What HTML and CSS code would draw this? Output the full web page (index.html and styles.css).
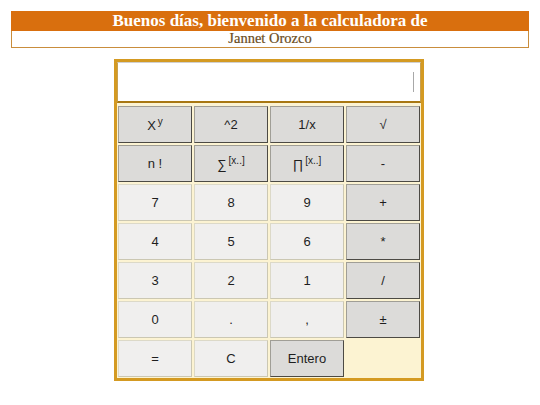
FILE: index.html
```html
<!DOCTYPE html>
<html lang="es">
<head>
<meta charset="utf-8">
<title>Calculadora</title>
<link rel="stylesheet" href="styles.css">
</head>
<body>
<header class="header">
  <div class="title">Buenos días, bienvenido a la calculadora de</div>
  <div class="author">Jannet Orozco</div>
</header>
<main class="calc">
  <div class="display"><span class="caret"></span></div>
  <div class="keys">
    <button class="key fn">X<sup>y</sup></button>
    <button class="key fn">^2</button>
    <button class="key fn">1/x</button>
    <button class="key fn">√</button>
    <button class="key fn">n !</button>
    <button class="key fn">∑<sup>[x..]</sup></button>
    <button class="key fn">∏<sup>[x..]</sup></button>
    <button class="key fn">-</button>
    <button class="key num">7</button>
    <button class="key num">8</button>
    <button class="key num">9</button>
    <button class="key fn">+</button>
    <button class="key num">4</button>
    <button class="key num">5</button>
    <button class="key num">6</button>
    <button class="key fn">*</button>
    <button class="key num">3</button>
    <button class="key num">2</button>
    <button class="key num">1</button>
    <button class="key fn">/</button>
    <button class="key num">0</button>
    <button class="key num">.</button>
    <button class="key num">,</button>
    <button class="key fn">±</button>
    <button class="key num">=</button>
    <button class="key num">C</button>
    <button class="key fn">Entero</button>
    <div class="blank"></div>
  </div>
</main>
</body>
</html>
```
FILE: styles.css
```css
html, body {
  margin: 0;
  padding: 0;
  background: #ffffff;
}

.header {
  margin: 11px 11px 0;
  font-family: "Liberation Serif", "Times New Roman", serif;
  text-align: center;
}

.title {
  background: #d96f0e;
  color: #ffffff;
  font-weight: bold;
  font-size: 17px;
  height: 20px;
  line-height: 20px;
}

.author {
  border: 1px solid #c98d3c;
  border-top: none;
  color: #6a4c1c;
  font-size: 14.5px;
  height: 16px;
  line-height: 15px;
  -webkit-text-stroke: 0.2px #6a4c1c;
}

.calc {
  width: 304px;
  margin: 11px 0 0 114px;
  border: 3px solid #d49a22;
  background: #fcf3d2;
}

.display {
  height: 38px;
  background: #ffffff;
  border-top: 1px solid #d0d0d0;
  border-left: 1px solid #c8a050;
  border-right: 1px solid #c8a050;
  border-bottom: 2px solid #a87712;
  display: flex;
  justify-content: flex-end;
  align-items: center;
  padding-right: 6px;
}

.caret {
  width: 1px;
  height: 20px;
  background: #a8a8a8;
}

.keys {
  display: grid;
  grid-template-columns: repeat(4, 74px);
  grid-auto-rows: 37px;
  gap: 2px;
  padding: 3px 1px 1px;
}

.key {
  margin: 0;
  padding: 0;
  font-family: "Liberation Sans", Arial, sans-serif;
  font-size: 13px;
  color: #1e1e1e;
  cursor: pointer;
}

.key sup {
  font-size: 10px;
  vertical-align: 5px;
  margin-left: 2px;
}

.fn {
  background: #dcdbd9;
  border: 1px solid #a09e96;
  border-right-color: #4c4a44;
  border-bottom-color: #4c4a44;
}

.num {
  background: #f0efee;
  border: 1px solid #dcd9c8;
  border-right-color: #cbc7b2;
  border-bottom-color: #cbc7b2;
}

.blank {
  background: #fcf3d2;
}
```
